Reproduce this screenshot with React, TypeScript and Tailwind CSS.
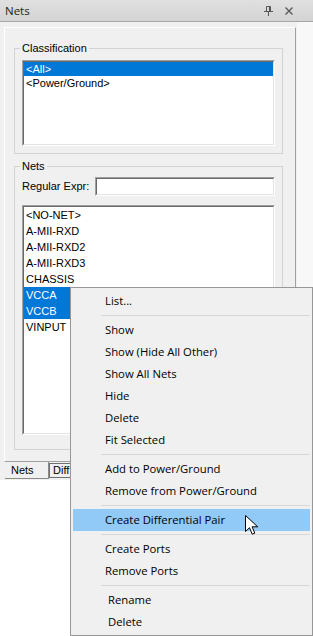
import type { ReactNode } from 'react'

const classifications = ['<All>', '<Power/Ground>']
const nets = ['<NO-NET>', 'A-MII-RXD', 'A-MII-RXD2', 'A-MII-RXD3', 'CHASSIS', 'VCCA', 'VCCB', 'VINPUT']
const selectedNets = ['VCCA', 'VCCB']

type MenuEntry = { label: string; indent?: boolean; active?: boolean } | 'sep'

const menuEntries: MenuEntry[] = [
  { label: 'List...' },
  'sep',
  { label: 'Show' },
  { label: 'Show (Hide All Other)' },
  { label: 'Show All Nets' },
  { label: 'Hide' },
  { label: 'Delete' },
  { label: 'Fit Selected' },
  'sep',
  { label: 'Add to Power/Ground' },
  { label: 'Remove from Power/Ground' },
  'sep',
  { label: 'Create Differential Pair', active: true },
  'sep',
  { label: 'Create Ports' },
  { label: 'Remove Ports' },
  'sep',
  { label: 'Rename', indent: true },
  { label: 'Delete', indent: true },
]

function Sunken({ className, children }: { className: string; children?: ReactNode }) {
  return (
    <div className={`border border-t-[#a0a0a0] border-l-[#a0a0a0] border-r-white border-b-white ${className}`}>
      <div className="h-full border border-t-[#696969] border-l-[#696969] border-r-[#e3e3e3] border-b-[#e3e3e3] bg-white">
        {children}
      </div>
    </div>
  )
}

function GroupBox({ title, className, children }: { title: string; className?: string; children: ReactNode }) {
  return (
    <fieldset className={`w-[269px] border border-[#d3d3d3] ${className ?? ''}`}>
      <legend className="ml-[5px] px-[2px] text-[11px] leading-[14px] text-black">{title}</legend>
      <div className="px-[7px]">{children}</div>
    </fieldset>
  )
}

function TitleBar() {
  return (
    <div className="flex h-[22px] items-center justify-between border-b border-[#a6a6a6] bg-linear-to-b from-[#e0e0e0] to-[#d3d3d3] pl-[5px] pr-[20px]">
      <span className="font-['Open_Sans',sans-serif] text-[11.5px] text-[#1e1e1e]">Nets</span>
      <div className="flex items-center gap-[11px]">
        <svg width="10" height="10" viewBox="0 0 10 10" fill="none" stroke="#555" strokeWidth="1">
          <path d="M2.5 0.5h4v5h-4z" />
          <path d="M5.5 0.5v5" />
          <path d="M0 5.5h9" />
          <path d="M4.5 5.5v4.5" />
        </svg>
        <svg width="8" height="8" viewBox="0 0 8 8" fill="none" stroke="#555" strokeWidth="1.3">
          <path d="M0.5 0.5l7 7M7.5 0.5l-7 7" />
        </svg>
      </div>
    </div>
  )
}

function ContextMenu() {
  return (
    <div className="absolute left-[70px] top-[287px] h-[349px] w-[243px] border border-[#979797] bg-[#f0f0f0] px-[2px] pt-[2px] font-['Open_Sans',sans-serif] text-[11.3px] text-black">
      {menuEntries.map((entry, i) =>
        entry === 'sep' ? (
          <div key={i} className="h-[7px] pl-[28px] pt-[3px]">
            <div className="h-px bg-[#d7d7d7]" />
          </div>
        ) : (
          <div
            key={i}
            className={`flex h-[22px] items-center ${entry.indent ? 'pl-[35px]' : 'pl-[32px]'} ${
              entry.active ? 'bg-[#91c9f7]' : ''
            }`}
          >
            {entry.label}
          </div>
        ),
      )}
    </div>
  )
}

function Cursor() {
  return (
    <svg className="absolute left-[245px] top-[515px]" width="13" height="21" viewBox="0 0 13 21">
      <path d="M0.5 0.5v16l4-3.8 2.7 6.5 2.6-1.1-2.7-6.3h5.6z" fill="#fff" stroke="#000" strokeWidth="1" />
    </svg>
  )
}

export default function App() {
  return (
    <div className="relative h-[636px] w-[313px] overflow-hidden bg-white font-['Liberation_Sans',Arial,sans-serif]">
      <TitleBar />
      <div className="flex">
        <div className="w-[297px] bg-[#f0f0f0] pb-[1px] pl-[4px] pt-[5px]">
          <div className="w-[292px] border border-t-white border-l-white border-r-[#a0a0a0] border-b-[#a0a0a0] pb-[11px] pl-[9px] pt-[13px]">
            <GroupBox title="Classification">
              <div className="pb-[7px] pt-[5px]">
                <Sunken className="h-[86px] w-[253px]">
                  {classifications.map((c, i) => (
                    <div
                      key={c}
                      className={`h-[14px] pl-[2px] text-[11px] leading-[14px] ${
                        i === 0 ? 'bg-[#0078d7] text-white' : 'text-black'
                      }`}
                    >
                      {c}
                    </div>
                  ))}
                </Sunken>
              </div>
            </GroupBox>
            <GroupBox title="Nets" className="mt-[5px]">
              <div className="pb-[14px] pt-[4px]">
                <div className="flex h-[19px] items-center">
                  <span className="w-[73px] text-[11px] text-black">Regular Expr:</span>
                  <Sunken className="h-[19px] w-[180px]" />
                </div>
                <Sunken className="mt-[9px] h-[230px] w-[253px]">
                  {nets.map((n) => (
                    <div
                      key={n}
                      className={`h-[16px] pl-[2px] text-[11px] leading-[16px] ${
                        selectedNets.includes(n) ? 'bg-[#0078d7] text-white' : 'text-black'
                      }`}
                    >
                      {n}
                    </div>
                  ))}
                </Sunken>
              </div>
            </GroupBox>
          </div>
          <div className="flex items-start pl-[1px] text-[11px] text-black">
            <div className="h-[17px] w-[44px] border-b border-r border-b-[#8a8a8a] border-r-[#8a8a8a] pl-[6px] leading-[17px]">
              Nets
            </div>
            <div className="mt-[1px] h-[15px] w-[60px] overflow-hidden whitespace-nowrap border border-[#6f6f6f] pl-[3px] leading-[13px]">
              Diff Pairs
            </div>
          </div>
        </div>
        <div className="h-[458px] flex-1 bg-[#f8f8f8]" />
      </div>
      <ContextMenu />
      <Cursor />
    </div>
  )
}
